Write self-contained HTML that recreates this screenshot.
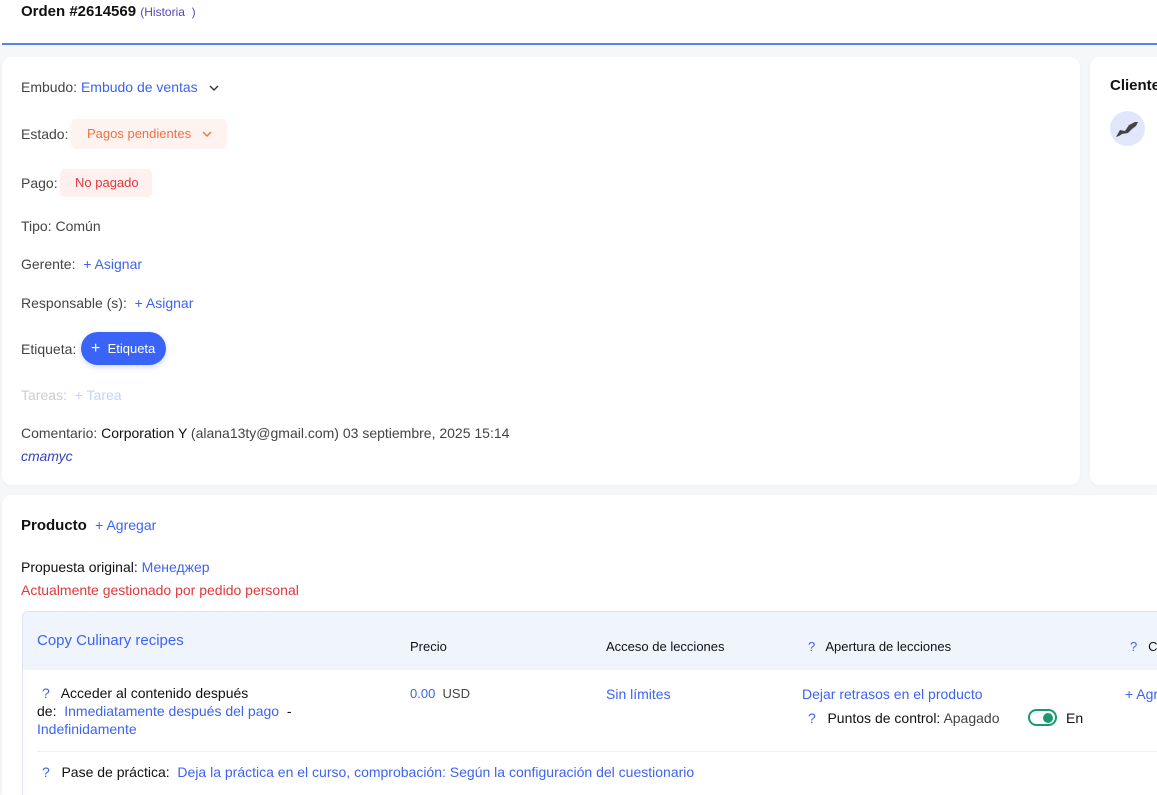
<!DOCTYPE html>
<html><head><meta charset="utf-8"><style>
*{box-sizing:border-box;margin:0;padding:0}
html{width:1157px;height:795px;overflow:hidden}
body{width:1157px;height:795px;overflow:hidden;background:#f5f7f9;font-family:"Liberation Sans",sans-serif;font-size:14px;color:#444;position:relative}
.abs{position:absolute;white-space:nowrap}
.blue{color:#3d63f0}
.card{position:absolute;background:#fff;border-radius:10px;box-shadow:0 1px 4px rgba(0,0,0,.04)}
.q{color:#3d63f0;}
</style></head><body>
<div style="position:absolute;left:0;top:0;width:1157px;height:44px;background:#fff"></div>
<div class="abs" style="left:21px;top:3px;font-size:15px;font-weight:bold;color:#111">Orden #2614569 <span style="font-weight:normal;font-size:12px;color:#5546b8">(Historia &nbsp;)</span></div>
<div style="position:absolute;left:2px;top:43px;width:1155px;height:2px;background:#5b80f5"></div>

<div class="card" style="left:2px;top:57px;width:1078px;height:428px"></div>
<div class="card" style="left:1090px;top:57px;width:67px;height:428px;border-radius:10px 0 0 10px"></div>
<div class="card" style="left:2px;top:495px;width:1155px;height:300px;border-radius:10px 0 0 0"></div>

<div class="abs" style="left:21px;top:79px">Embudo: <span class="blue">Embudo de ventas</span> <svg width="12" height="8" style="margin-left:6px" viewBox="0 0 12 8"><path d="M2 2l4 4 4-4" stroke="#333" stroke-width="1.4" fill="none"/></svg></div>
<div class="abs" style="left:21px;top:126px">Estado:</div>
<div class="abs" style="left:71px;top:119px;width:156px;height:30px;background:#fff3f0;border-radius:5px;color:#f4703f;font-size:13px;padding:7px 0 0 16px">Pagos pendientes <svg width="12" height="8" style="margin-left:6px" viewBox="0 0 12 8"><path d="M2 2l4 4 4-4" stroke="#f4703f" stroke-width="1.4" fill="none"/></svg></div>
<div class="abs" style="left:21px;top:175px">Pago:</div>
<div class="abs" style="left:60px;top:169px;width:92px;height:28px;background:#fff0f0;border-radius:5px;color:#e0383b;font-size:13px;padding:6px 0 0 15px">No pagado</div>
<div class="abs" style="left:21px;top:218px">Tipo: Común</div>
<div class="abs" style="left:21px;top:256px">Gerente: &nbsp;<span class="blue">+ Asignar</span></div>
<div class="abs" style="left:21px;top:295px">Responsable (s): &nbsp;<span class="blue">+ Asignar</span></div>
<div class="abs" style="left:21px;top:341px">Etiqueta:</div>
<div class="abs" style="left:81px;top:332px;width:85px;height:33px;background:#3a64f8;border-radius:17px;color:#fff;font-size:13px;padding:9px 0 0 10px;box-shadow:0 2px 6px rgba(58,100,248,.25)"><span style="font-size:16px;line-height:14px">+</span>&nbsp; Etiqueta</div>
<div class="abs" style="left:21px;top:387px;color:#ccc">Tareas: &nbsp;<span style="color:#c5d1fb">+ Tarea</span></div>
<div class="abs" style="left:21px;top:425px">Comentario: <span style="color:#111">Corporation Y</span> (alana13ty@gmail.com) 03 septiembre, 2025 15:14</div>
<div class="abs" style="left:21px;top:448px;font-style:italic;color:#3a44b8">статус</div>

<div class="abs" style="left:1110px;top:77px;font-size:15px;font-weight:bold;color:#111">Cliente</div>
<div class="abs" style="left:1110px;top:111px;width:35px;height:35px;border-radius:50%;background:#e1e6fb"><svg width="35" height="35" viewBox="0 0 35 35"><path d="M6 26l4-7 5 1 4-6 6-3 3 0-2 4-4 3-4 4-6 1-3 2z" fill="#444"/></svg></div>

<div class="abs" style="left:21px;top:517px;font-size:15px;font-weight:bold;color:#111">Producto &nbsp;<span class="blue" style="font-weight:normal;font-size:14px">+ Agregar</span></div>
<div class="abs" style="left:21px;top:559px;color:#111">Propuesta original: <span class="blue">Менеджер</span></div>
<div class="abs" style="left:21px;top:582px;color:#e0383b">Actualmente gestionado por pedido personal</div>

<div style="position:absolute;left:22px;top:611px;width:1135px;height:184px;border:1px solid #dfe4ee;border-right:none;border-bottom:none;border-radius:6px 0 0 0;background:#fff;overflow:hidden">
<div style="height:58px;background:#f0f4fd"></div>
</div>
<div class="abs blue" style="left:37px;top:632px;font-size:15px">Copy Culinary recipes</div>
<div class="abs" style="left:410px;top:639px;font-size:13px;color:#111">Precio</div>
<div class="abs" style="left:606px;top:639px;font-size:13px;color:#111">Acceso de lecciones</div>
<div class="abs" style="left:808px;top:639px;font-size:13px;color:#111"><span class="q">?</span> &nbsp; Apertura de lecciones</div>
<div class="abs" style="left:1130px;top:639px;font-size:13px;color:#111"><span class="q">?</span> &nbsp; C</div>

<div class="abs" style="left:42px;top:685px;color:#111"><span class="q">?</span> &nbsp; Acceder al contenido después</div>
<div class="abs" style="left:37px;top:703px;color:#111">de: &nbsp;<span class="blue">Inmediatamente después del pago</span> &nbsp;-</div>
<div class="abs blue" style="left:37px;top:721px">Indefinidamente</div>
<div class="abs" style="left:410px;top:686px;font-size:13px"><span class="blue">0.00</span> &nbsp;USD</div>
<div class="abs blue" style="left:606px;top:686px">Sin límites</div>
<div class="abs blue" style="left:802px;top:686px">Dejar retrasos en el producto</div>
<div class="abs" style="left:808px;top:710px;color:#111"><span class="q">?</span> &nbsp; Puntos de control: <span style="color:#444">Apagado</span></div>
<div class="abs" style="left:1028px;top:709px;width:29px;height:17px;border:2px solid #1a9a6c;border-radius:9px"><div style="position:absolute;right:2px;top:2px;width:10px;height:10px;border-radius:50%;background:#1a9a6c"></div></div>
<div class="abs" style="left:1066px;top:710px;color:#111">En</div>
<div class="abs blue" style="left:1125px;top:686px">+ Agregar</div>
<div style="position:absolute;left:37px;top:751px;width:1120px;height:1px;background:#eceff4"></div>
<div class="abs" style="left:42px;top:764px;color:#111"><span class="q">?</span> &nbsp; Pase de práctica: &nbsp;<span class="blue">Deja la práctica en el curso, comprobación: Según la configuración del cuestionario</span></div>
</body></html>
